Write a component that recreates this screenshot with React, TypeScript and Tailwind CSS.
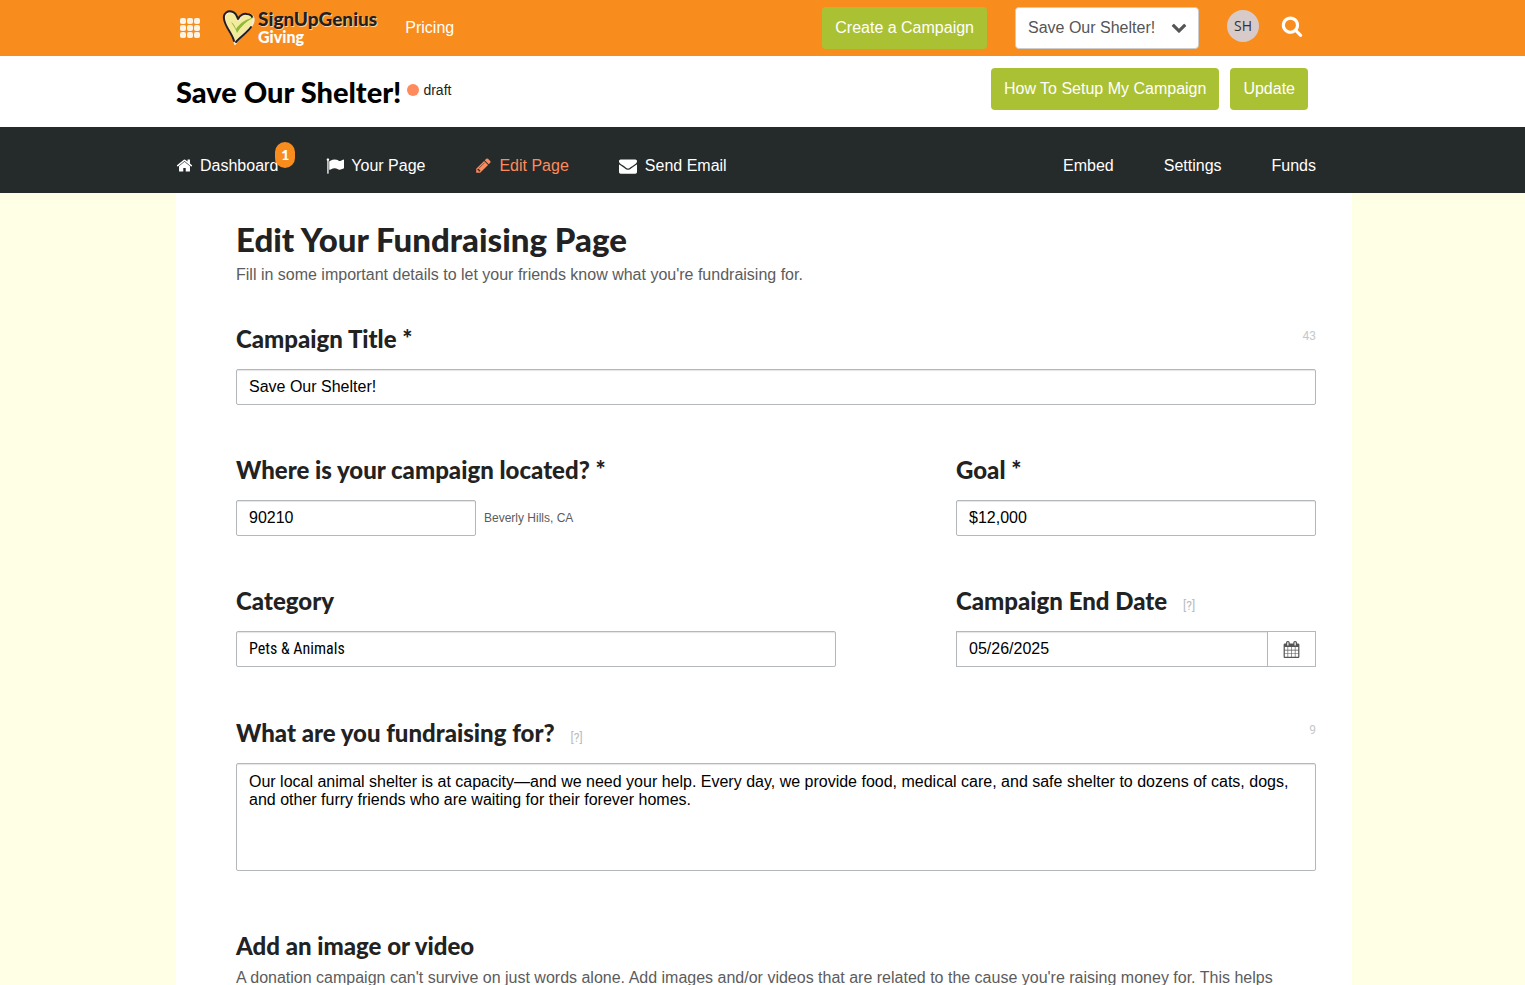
import type { ReactNode } from "react";

// ─── Icons ───────────────────────────────────────────────────────────────────

const ICONS = {
  home: "M1472 992v480q0 26-19 45t-45 19h-384v-384h-256v384h-384q-26 0-45-19t-19-45v-480q0-1 .5-3t.5-3l575-474 575 474q1 2 1 6zm223-69l-62 74q-8 9-21 11h-3q-13 0-21-7l-692-577-692 577q-12 8-24 7-13-2-21-11l-62-74q-8-10-7-23.5t11-21.5l719-599q32-26 76-26t76 26l244 204v-195q0-14 9-23t23-9h192q14 0 23 9t9 23v408l219 182q10 8 11 21.5t-7 23.5z",
  flag: "M320 256q0 72-64 110v1266q0 13-9.5 22.5t-22.5 9.5h-64q-13 0-22.5-9.5t-9.5-22.5v-1266q-64-38-64-110 0-53 37.5-90.5t90.5-37.5 90.5 37.5 37.5 90.5zm1472 64v763q0 25-12.5 38.5t-39.5 27.5q-215 116-369 116-61 0-123.5-22t-108.5-48-115.5-48-142.5-22q-192 0-464 146-17 9-33 9-26 0-45-19t-19-45v-742q0-32 31-55 21-14 79-43 236-120 421-120 107 0 200 29t219 88q38 19 88 19 54 0 117.5-21t110-47 88-47 54.5-21q26 0 45 19t19 45z",
  pencil: "M491 1536l91-91-235-235-91 91v107h128v128h107zm523-928q0-22-22-22-10 0-17 7l-542 542q-7 7-7 17 0 22 22 22 10 0 17-7l542-542q7-7 7-17zm-54-192l416 416-832 832h-416v-416zm683 96q0 53-37 90l-166 166-416-416 166-165q36-38 90-38 53 0 91 38l235 234q37 39 37 91z",
  envelope: "M1792 710v794q0 66-47 113t-113 47h-1472q-66 0-113-47t-47-113v-794q44 49 101 87 362 246 497 345 57 42 92.5 65.5t94.5 48 110 24.5h2q51 0 110-24.5t94.5-48 92.5-65.5q170-123 498-345 57-39 100-87zm0-294q0 79-49 151t-122 123q-376 261-468 325-10 7-42.5 31t-54 38.5-52 32.5-57.5 27-50 9h-2q-23 0-50-9t-57.5-27-52-32.5-54-38.5-42.5-31q-91-64-262-182.5t-205-142.5q-62-42-117-115.5t-55-136.5q0-78 41.5-130t118.5-52h1472q65 0 112.5 47t47.5 113z",
  search: "M1216 832q0-185-131.5-316.5t-316.5-131.5-316.5 131.5-131.5 316.5 131.5 316.5 316.5 131.5 316.5-131.5 131.5-316.5zm512 832q0 52-38 90t-90 38q-54 0-90-38l-343-342q-179 124-399 124-143 0-273.5-55.5t-225-150-150-225-55.5-273.5 55.5-273.5 150-225 225-150 273.5-55.5 273.5 55.5 225 150 150 225 55.5 273.5q0 220-124 399l343 343q37 37 37 90z",
  chevron: "M1683 808l-742 741q-19 19-45 19t-45-19l-742-741q-19-19-19-45.5t19-45.5l166-165q19-19 45-19t45 19l531 531 531-531q19-19 45-19t45 19l166 165q19 19 19 45.5t-19 45.5z",
  calendar: "M192 1664h288v-288h-288v288zm352 0h320v-288h-320v288zm-352-352h288v-320h-288v320zm352 0h320v-320h-320v320zm-352-384h288v-288h-288v288zm736 736h320v-288h-320v288zm-384-736h320v-288h-320v288zm768 736h288v-288h-288v288zm-384-352h320v-320h-320v320zm-352-864v-288q0-13-9.5-22.5t-22.5-9.5h-64q-13 0-22.5 9.5t-9.5 22.5v288q0 13 9.5 22.5t22.5 9.5h64q13 0 22.5-9.5t9.5-22.5zm736 864h288v-320h-288v320zm-384-384h320v-288h-320v288zm384 0h288v-288h-288v288zm32-480v-288q0-13-9.5-22.5t-22.5-9.5h-64q-13 0-22.5 9.5t-9.5 22.5v288q0 13 9.5 22.5t22.5 9.5h64q13 0 22.5-9.5t9.5-22.5zm384-64v1280q0 52-38 90t-90 38h-1408q-52 0-90-38t-38-90v-1280q0-52 38-90t90-38h128v-96q0-66 47-113t113-47h64q66 0 113 47t47 113v96h384v-96q0-66 47-113t113-47h64q66 0 113 47t47 113v96h128q52 0 90 38t38 90z",
};

const Icon = ({ name, className }: { name: keyof typeof ICONS; className: string }) => (
  <svg viewBox="0 0 1792 1792" fill="currentColor" aria-hidden="true" className={className}>
    <path d={ICONS[name]} />
  </svg>
);

const AppsIcon = () => (
  <svg viewBox="0 0 20 20" fill="#fff3e6" aria-hidden="true" className="size-5">
    {[0, 7, 14].map((y) =>
      [0, 7, 14].map((x) => <rect key={`${x}-${y}`} x={x} y={y} width="6" height="6" rx="2" />)
    )}
  </svg>
);

const HeartLogo = () => (
  <svg viewBox="0 0 34 38" fill="none" strokeLinecap="round" strokeLinejoin="round" aria-hidden="true" className="h-[38px] w-[34px]">
    <path
      d="M13 35C12 27 4 20 3 10 2 4 8 2 12 4c3 2 4 4 5 7 2-4 6-6 9-6 6 1 7 6 4 11-4 7-12 11-17 19z"
      fill="#f3ec9c"
      stroke="#f7ead8"
      strokeWidth="2"
    />
    <path
      d="M12 32C10 24 3 18 2 10 1 4 6 1 11 3c3 1 4 4 5 7 2-4 6-6 9-5 3 0 5 2 5 3M29 18c-4 6-10 9-15 15"
      stroke="#231f20"
      strokeWidth="2"
    />
    <path d="M9 13c2 1 4 4 5 7 4-6 10-10 19-12-7 3-14 9-18 16-1-4-4-8-6-11z" fill="#8fb93b" />
  </svg>
);

// ─── Shared pieces ───────────────────────────────────────────────────────────

const HEADING = "font-['Lato_Black',Lato,sans-serif] font-black";

const FIELD =
  "h-9 border border-[#b5b8ba] bg-white px-3 text-base text-black shadow-[inset_0_1px_1px_rgba(0,0,0,0.1)] outline-none";

const GREEN_BUTTON = "h-[42px] rounded-[4px] bg-[#abc134] px-[13px] text-base text-white";

const Container = ({ className, children }: { className: string; children: ReactNode }) => (
  <div className="pl-[3px]">
    <div className={`mx-auto max-w-[1176px] ${className}`}>{children}</div>
  </div>
);

interface FieldLabelProps {
  id: string;
  label: string;
  help?: boolean;
  count?: number;
}

const FieldLabel = ({ id, label, help, count }: FieldLabelProps) => (
  <div className="mb-[14px] flex h-8 items-center">
    <label htmlFor={id} className={`${HEADING} text-2xl leading-8 text-[#222]`}>
      {label}
    </label>
    {help && (
      <button type="button" className="mt-[10px] ml-4 font-[Roboto,sans-serif] text-xs text-[#b9bcbe]">
        [?]
      </button>
    )}
    {count !== undefined && (
      <span className="mb-[6px] ml-auto font-[Roboto,sans-serif] text-xs text-[#c5c9cb]">{count}</span>
    )}
  </div>
);

// ─── Page ────────────────────────────────────────────────────────────────────

const TopBar = () => (
  <header className="bg-[#f88d1e]">
    <Container className="flex h-14 items-center">
      <button type="button" aria-label="Apps" className="ml-1">
        <AppsIcon />
      </button>
      <a href="#home" className="ml-[22px] flex items-center">
        <HeartLogo />
        <span className={`ml-[2px] flex flex-col ${HEADING}`}>
          <span className="text-[19px] leading-[18px] text-[#231f20] [text-shadow:1px_1px_0_rgba(255,255,255,0.6)]">
            SignUpGenius
          </span>
          <span className="text-base leading-[18px] text-white">Giving</span>
        </span>
      </a>
      <a href="#pricing" className="ml-7 text-base text-white">
        Pricing
      </a>
      <button type="button" className={`ml-auto ${GREEN_BUTTON}`}>
        Create a Campaign
      </button>
      <div className="relative ml-7">
        <select
          aria-label="Campaign"
          className="h-[42px] w-[184px] appearance-none rounded-[4px] border border-[#ccc] bg-white px-3 text-base text-[#555]"
        >
          <option>Save Our Shelter!</option>
        </select>
        <Icon name="chevron" className="pointer-events-none absolute top-3 right-3 size-4 text-[#555]" />
      </div>
      <button
        type="button"
        className="mb-1 ml-7 size-8 rounded-full bg-[#d8cac8] font-['Open_Sans',sans-serif] text-sm text-[#333]"
      >
        SH
      </button>
      <button type="button" aria-label="Search" className="mr-[49px] mb-1 ml-[22px] text-white">
        <Icon name="search" className="size-[22px]" />
      </button>
    </Container>
  </header>
);

const CampaignHeader = () => (
  <section className="bg-white">
    <Container className="flex h-[71px] items-center">
      <h1 className={`${HEADING} text-[29px] text-black`}>Save Our Shelter!</h1>
      <span className="mb-1 ml-[6px] size-3 rounded-full bg-[#ff8a5c]" />
      <span className="mb-1 ml-1 text-sm text-[#222]">draft</span>
      <div className="mr-11 mb-[5px] ml-auto flex gap-[11px]">
        <button type="button" className={GREEN_BUTTON}>
          How To Setup My Campaign
        </button>
        <button type="button" className={GREEN_BUTTON}>
          Update
        </button>
      </div>
    </Container>
  </section>
);

const NavBar = () => (
  <nav className="bg-[#252a2b] text-base text-white">
    <Container className="flex h-[66px] items-center pt-[11px] pr-9">
      <div className="flex gap-[50px]">
        <a href="#dashboard" className="relative flex items-center gap-[7px]">
          <Icon name="home" className="size-[17px]" />
          Dashboard
          <span
            className={`absolute -top-3 -right-[17px] flex h-[26px] w-5 items-center justify-center rounded-full bg-[#f88d1e] text-sm ${HEADING}`}
          >
            1
          </span>
        </a>
        <a href="#page" className="-ml-[2px] flex items-center gap-[7px]">
          <Icon name="flag" className="size-[18px]" />
          Your Page
        </a>
        <a href="#edit" aria-current="page" className="flex items-center gap-[7px] text-[#ff8a5c]">
          <Icon name="pencil" className="size-[17px]" />
          Edit Page
        </a>
        <a href="#email" className="flex items-center gap-2">
          <Icon name="envelope" className="size-[18px]" />
          Send Email
        </a>
      </div>
      <div className="ml-auto flex gap-[50px]">
        <a href="#embed">Embed</a>
        <a href="#settings">Settings</a>
        <a href="#funds">Funds</a>
      </div>
    </Container>
  </nav>
);

const EditForm = () => (
  <form className="pt-[26px] pr-9 pl-[60px]">
    <h2 className={`${HEADING} text-[33px] leading-10 text-[#222]`}>Edit Your Fundraising Page</h2>
    <p className="mt-1 text-base text-[#5c5c5c]">
      Fill in some important details to let your friends know what you're fundraising for.
    </p>

    <div className="mt-9">
      <FieldLabel id="title" label="Campaign Title *" count={43} />
      <input id="title" type="text" defaultValue="Save Our Shelter!" className={`block w-full rounded-[2px] ${FIELD}`} />
    </div>

    <div className="mt-[49px] grid grid-cols-3 gap-y-[49px]">
      <div className="col-span-2">
        <FieldLabel id="zip" label="Where is your campaign located? *" />
        <div className="flex items-center">
          <input id="zip" type="text" defaultValue="90210" className={`w-1/3 rounded-[2px] ${FIELD}`} />
          <span className="ml-2 text-xs text-[#5c5c5c]">Beverly Hills, CA</span>
        </div>
      </div>
      <div>
        <FieldLabel id="goal" label="Goal *" />
        <input id="goal" type="text" defaultValue="$12,000" className={`block w-full rounded-[2px] ${FIELD}`} />
      </div>
      <div className="col-span-2">
        <FieldLabel id="category" label="Category" />
        <select
          id="category"
          className={`block w-5/6 appearance-none rounded-[2px] font-['Roboto_Condensed',Roboto,sans-serif] ${FIELD}`}
        >
          <option>Pets &amp; Animals</option>
        </select>
      </div>
      <div>
        <FieldLabel id="end-date" label="Campaign End Date" help />
        <div className="flex">
          <input id="end-date" type="text" defaultValue="05/26/2025" className={`min-w-0 flex-1 ${FIELD}`} />
          <button
            type="button"
            aria-label="Pick a date"
            className="flex w-12 items-center justify-center border border-l-0 border-[#b5b8ba] text-[#555]"
          >
            <Icon name="calendar" className="size-[17px]" />
          </button>
        </div>
      </div>
    </div>

    <div className="mt-[50px]">
      <FieldLabel id="story" label="What are you fundraising for?" help count={9} />
      <textarea
        id="story"
        className="block h-[108px] w-full resize-none rounded-[2px] border border-[#b5b8ba] px-3 py-[9px] text-base leading-[18px] text-black shadow-[inset_0_1px_1px_rgba(0,0,0,0.1)] outline-none"
        defaultValue="Our local animal shelter is at capacity—and we need your help. Every day, we provide food, medical care, and safe shelter to dozens of cats, dogs, and other furry friends who are waiting for their forever homes."
      />
    </div>

    <h3 className={`mt-[59px] ${HEADING} text-2xl leading-8 text-[#222]`}>Add an image or video</h3>
    <p className="mt-1 text-base text-[#5c5c5c]">
      A donation campaign can't survive on just words alone. Add images and/or videos that are related to the cause
      you're raising money for. This helps
    </p>
  </form>
);

export default function App() {
  return (
    <div className="min-h-screen bg-[#ffffe6] font-['Helvetica_Neue',Helvetica,'Liberation_Sans',Arial,sans-serif]">
      <TopBar />
      <CampaignHeader />
      <NavBar />
      <main>
        <Container className="bg-white">
          <EditForm />
        </Container>
      </main>
    </div>
  );
}
